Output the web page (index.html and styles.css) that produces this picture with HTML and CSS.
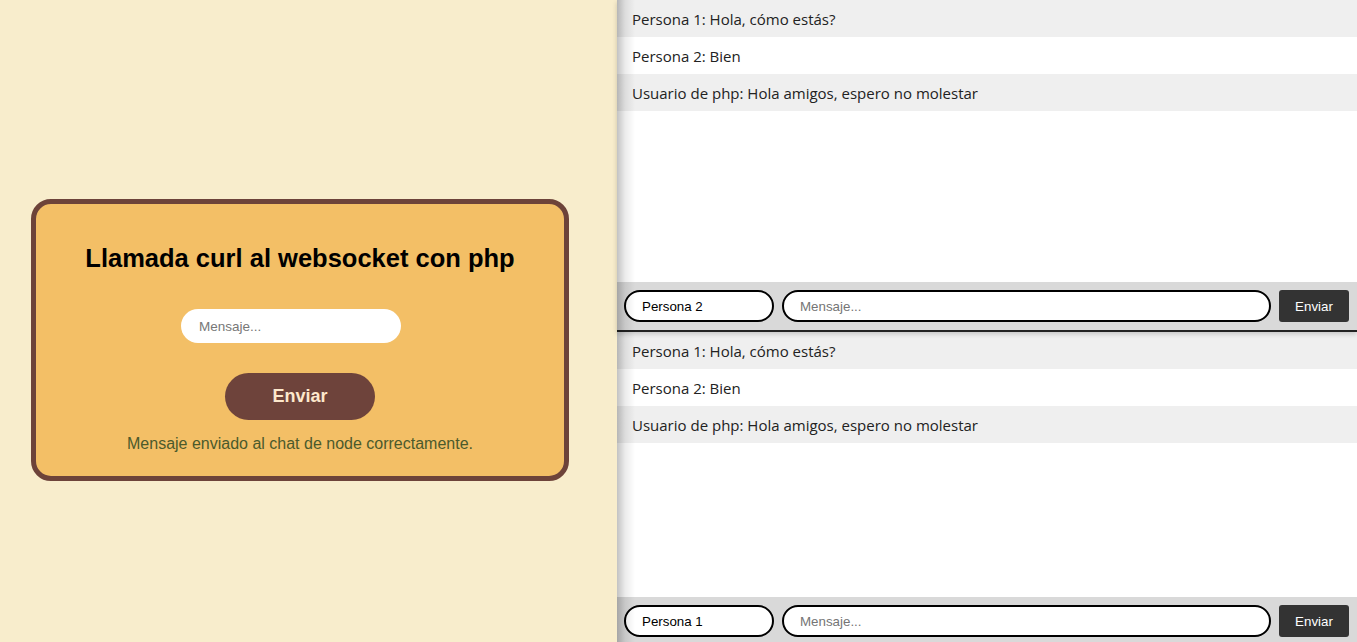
FILE: index.html
```html
<!DOCTYPE html>
<html lang="es">
<head>
<meta charset="utf-8">
<title>Llamada curl al websocket con php</title>
<link rel="stylesheet" href="styles.css">
</head>
<body>
  <main class="layout">
    <section class="sender">
      <div class="card">
        <h2 class="card-title">Llamada curl al websocket con php</h2>
        <input class="card-input" type="text" placeholder="Mensaje...">
        <button class="card-button" type="button">Enviar</button>
        <p class="card-status">Mensaje enviado al chat de node correctamente.</p>
      </div>
    </section>
    <section class="chats">
      <div class="chat chat-top">
        <ul class="messages">
          <li>Persona 1: Hola, cómo estás?</li>
          <li>Persona 2: Bien</li>
          <li>Usuario de php: Hola amigos, espero no molestar</li>
        </ul>
        <form class="chat-form">
          <input class="chat-name" type="text" value="Persona 2">
          <input class="chat-msg" type="text" placeholder="Mensaje...">
          <button class="chat-send" type="button">Enviar</button>
        </form>
      </div>
      <div class="chat chat-bottom">
        <ul class="messages">
          <li>Persona 1: Hola, cómo estás?</li>
          <li>Persona 2: Bien</li>
          <li>Usuario de php: Hola amigos, espero no molestar</li>
        </ul>
        <form class="chat-form">
          <input class="chat-name" type="text" value="Persona 1">
          <input class="chat-msg" type="text" placeholder="Mensaje...">
          <button class="chat-send" type="button">Enviar</button>
        </form>
      </div>
    </section>
  </main>
</body>
</html>
```
FILE: styles.css
```css
* { box-sizing: border-box; }

html, body {
  margin: 0;
  height: 642px;
  overflow: hidden;
}

body {
  font-family: "Liberation Sans", Arial, sans-serif;
}

.layout {
  display: flex;
  height: 642px;
}

/* Left side */
.sender {
  width: 617px;
  flex: none;
  background: #f8edcc;
  display: flex;
  align-items: center;
  padding: 38px 0 0 31px;
}

.card {
  width: 538px;
  height: 282px;
  background: #f3bf66;
  border: 5px solid #6d4339;
  border-radius: 20px;
  display: flex;
  flex-direction: column;
  align-items: center;
  padding-top: 39px;
}

.card-title {
  margin: 0;
  font-size: 25.5px;
  line-height: 30px;
  font-weight: bold;
  color: #000;
}

.card-input {
  margin-top: 36px;
  margin-right: 18px;
  width: 220px;
  height: 34px;
  border: none;
  border-radius: 17px;
  background: #fff;
  padding: 0 18px;
  font-family: "Liberation Sans", Arial, sans-serif;
  font-size: 13.5px;
  outline: none;
}
.card-input::placeholder { color: #777; }

.card-button {
  margin-top: 30px;
  width: 150px;
  height: 47px;
  border: none;
  border-radius: 24px;
  background: #6e433b;
  color: #fde8cc;
  font-family: "Liberation Sans", Arial, sans-serif;
  font-size: 18px;
  font-weight: bold;
}

.card-status {
  margin: 15px 0 0;
  font-size: 16px;
  line-height: 18px;
  color: #4b5a2c;
}

/* Right side */
.chats {
  flex: 1;
  display: flex;
  flex-direction: column;
  position: relative;
  background: #fff;
}

.chats::after {
  content: "";
  position: absolute;
  left: 0;
  top: 0;
  bottom: 0;
  width: 18px;
  background: linear-gradient(to right, rgba(0,0,0,0.24), rgba(0,0,0,0.08) 45%, rgba(0,0,0,0));
  pointer-events: none;
  z-index: 3;
}

.chat {
  display: flex;
  flex-direction: column;
  background: #fff;
  flex: none;
}

.chat-top {
  height: 332px;
  border-bottom: 2px solid #222;
  box-shadow: 0 2px 5px rgba(0,0,0,0.18);
  position: relative;
  z-index: 2;
}

.chat-bottom {
  height: 313px;
}

.messages {
  list-style: none;
  margin: 0;
  padding: 0;
  flex: 1;
  font-family: "Open Sans", "Noto Sans", sans-serif;
  font-size: 15px;
  line-height: 21px;
  color: #222;
}

.messages li {
  padding: 9px 15px 7px;
}
.messages li:nth-child(odd) { background: #efefef; }

.chat-form {
  height: 48px;
  display: flex;
  padding: 4px 4px 4px 3px;
  background: #d9d9d9;
}

.chat-name,
.chat-msg {
  margin: 4px;
  height: 32px;
  border: 2px solid #000;
  border-radius: 16px;
  padding: 0 16px;
  background: #fff;
  font-family: "Liberation Sans", Arial, sans-serif;
  font-size: 13.33px;
  color: #000;
  outline: none;
}
.chat-name { width: 150px; flex: none; }
.chat-msg { flex: 1; min-width: 0; }
.chat-msg::placeholder { color: #757575; }

.chat-send {
  margin: 4px;
  width: 70px;
  height: 32px;
  border: none;
  border-radius: 3px;
  background: #333;
  color: #fff;
  font-family: "Liberation Sans", Arial, sans-serif;
  font-size: 13.33px;
}
```
